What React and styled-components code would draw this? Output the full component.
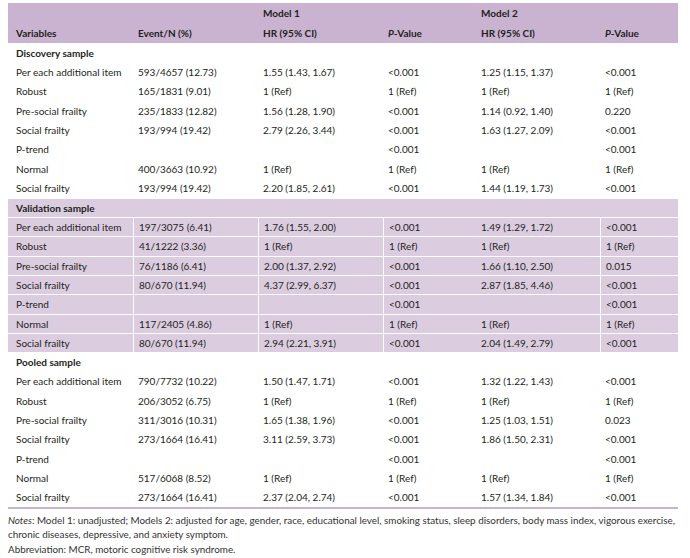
import React from "react";
import styled, { createGlobalStyle, css } from "styled-components";

const Global = createGlobalStyle`
  html, body { margin: 0; padding: 0; background: #fff; }
  body { padding: 3px 8px 0 8px; font-family: Lato, "Open Sans", sans-serif; color: #231f20; }
  * { box-sizing: border-box; }
`;

const COLS = "125px 125px 125px 93px 124px 78px";

const Table = styled.div`
  width: 670px;
  border-bottom: 2px solid #c9b3d1;
`;

const Head = styled.div`
  background: #c9b3d1;
  height: 40px;
  display: grid;
  grid-template-rows: 20px 20px;
`;

const Row = styled.div`
  display: grid;
  grid-template-columns: ${COLS};
  height: ${(p) => p.$h || "19.33px"};
  align-items: center;
  font-size: 10px;
  ${(p) =>
    p.$shaded &&
    css`
      background: #dccce0;
      border-top: 1px solid #fff;
    `}
`;

const Cell = styled.div`
  height: 100%;
  display: flex;
  align-items: center;
  padding-left: ${(p) => (p.$first ? "8px" : "5px")};
  white-space: nowrap;
  font-weight: ${(p) => (p.$bold ? 700 : 400)};
  ${(p) =>
    p.$line &&
    css`
      border-left: 1px solid #fff;
    `}
`;

const SectionCell = styled.div`
  grid-column: 1 / -1;
  padding-left: 8px;
  font-weight: 700;
  height: 100%;
  display: flex;
  align-items: center;
`;

const Notes = styled.div`
  font-size: 9.85px;
  line-height: 14.5px;
  color: #333;
  margin-top: 4px;
  width: 680px;
`;

const sections = [
  {
    title: "Discovery sample",
    shaded: false,
    rows: [
      ["Per each additional item", "593/4657 (12.73)", "1.55 (1.43, 1.67)", "<0.001", "1.25 (1.15, 1.37)", "<0.001"],
      ["Robust", "165/1831 (9.01)", "1 (Ref)", "1 (Ref)", "1 (Ref)", "1 (Ref)"],
      ["Pre-social frailty", "235/1833 (12.82)", "1.56 (1.28, 1.90)", "<0.001", "1.14 (0.92, 1.40)", "0.220"],
      ["Social frailty", "193/994 (19.42)", "2.79 (2.26, 3.44)", "<0.001", "1.63 (1.27, 2.09)", "<0.001"],
      ["P-trend", "", "", "<0.001", "", "<0.001"],
      ["Normal", "400/3663 (10.92)", "1 (Ref)", "1 (Ref)", "1 (Ref)", "1 (Ref)"],
      ["Social frailty", "193/994 (19.42)", "2.20 (1.85, 2.61)", "<0.001", "1.44 (1.19, 1.73)", "<0.001"],
    ],
  },
  {
    title: "Validation sample",
    shaded: true,
    rows: [
      ["Per each additional item", "197/3075 (6.41)", "1.76 (1.55, 2.00)", "<0.001", "1.49 (1.29, 1.72)", "<0.001"],
      ["Robust", "41/1222 (3.36)", "1 (Ref)", "1 (Ref)", "1 (Ref)", "1 (Ref)"],
      ["Pre-social frailty", "76/1186 (6.41)", "2.00 (1.37, 2.92)", "<0.001", "1.66 (1.10, 2.50)", "0.015"],
      ["Social frailty", "80/670 (11.94)", "4.37 (2.99, 6.37)", "<0.001", "2.87 (1.85, 4.46)", "<0.001"],
      ["P-trend", "", "", "<0.001", "", "<0.001"],
      ["Normal", "117/2405 (4.86)", "1 (Ref)", "1 (Ref)", "1 (Ref)", "1 (Ref)"],
      ["Social frailty", "80/670 (11.94)", "2.94 (2.21, 3.91)", "<0.001", "2.04 (1.49, 2.79)", "<0.001"],
    ],
  },
  {
    title: "Pooled sample",
    shaded: false,
    rows: [
      ["Per each additional item", "790/7732 (10.22)", "1.50 (1.47, 1.71)", "<0.001", "1.32 (1.22, 1.43)", "<0.001"],
      ["Robust", "206/3052 (6.75)", "1 (Ref)", "1 (Ref)", "1 (Ref)", "1 (Ref)"],
      ["Pre-social frailty", "311/3016 (10.31)", "1.65 (1.38, 1.96)", "<0.001", "1.25 (1.03, 1.51)", "0.023"],
      ["Social frailty", "273/1664 (16.41)", "3.11 (2.59, 3.73)", "<0.001", "1.86 (1.50, 2.31)", "<0.001"],
      ["P-trend", "", "", "<0.001", "", "<0.001"],
      ["Normal", "517/6068 (8.52)", "1 (Ref)", "1 (Ref)", "1 (Ref)", "1 (Ref)"],
      ["Social frailty", "273/1664 (16.41)", "2.37 (2.04, 2.74)", "<0.001", "1.57 (1.34, 1.84)", "<0.001"],
    ],
  },
];

const lineCols = [false, true, true, true, false, true];

export default function App() {
  return (
    <>
      <Global />
      <Table>
        <Head>
          <Row $h="20px">
            <Cell $first />
            <Cell />
            <Cell $bold>Model 1</Cell>
            <Cell />
            <Cell $bold>Model 2</Cell>
            <Cell />
          </Row>
          <Row $h="20px">
            <Cell $first $bold>Variables</Cell>
            <Cell $bold>Event/N (%)</Cell>
            <Cell $bold>HR (95% CI)</Cell>
            <Cell $bold><i>P</i>-Value</Cell>
            <Cell $bold>HR (95% CI)</Cell>
            <Cell $bold><i>P</i>-Value</Cell>
          </Row>
        </Head>
        {sections.map((s) => (
          <React.Fragment key={s.title}>
            <Row $shaded={s.shaded}>
              <SectionCell>{s.title}</SectionCell>
            </Row>
            {s.rows.map((r, i) => (
              <Row key={i} $shaded={s.shaded}>
                {r.map((c, j) => (
                  <Cell key={j} $first={j === 0} $line={s.shaded && lineCols[j]}>
                    {c}
                  </Cell>
                ))}
              </Row>
            ))}
          </React.Fragment>
        ))}
      </Table>
      <Notes>
        <i>Notes</i>: Model 1: unadjusted; Models 2: adjusted for age, gender, race, educational level, smoking status, sleep disorders, body mass index, vigorous exercise, chronic diseases, depressive, and anxiety symptom.
        <br />
        Abbreviation: MCR, motoric cognitive risk syndrome.
      </Notes>
    </>
  );
}
